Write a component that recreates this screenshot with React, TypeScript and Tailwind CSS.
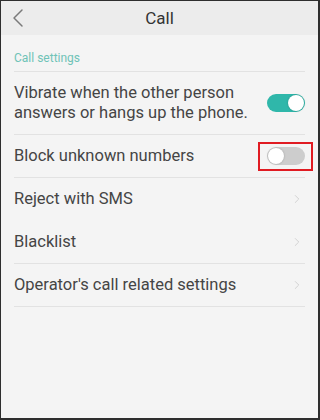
import { ChevronLeft, ChevronRight } from "lucide-react";

type Row = {
  label: string;
  kind: "on" | "off" | "link";
  tall?: boolean;
  boxed?: boolean;
  divider?: boolean;
};

const rows: Row[] = [
  { label: "Vibrate when the other person answers or hangs up the phone.", kind: "on", tall: true, divider: true },
  { label: "Block unknown numbers", kind: "off", boxed: true, divider: true },
  { label: "Reject with SMS", kind: "link", divider: false },
  { label: "Blacklist", kind: "link", divider: true },
  { label: "Operator's call related settings", kind: "link", divider: true },
];

function Toggle({ on }: { on: boolean }) {
  return (
    <div
      className={
        on
          ? "flex h-[18px] w-[38px] items-center justify-end rounded-full bg-[#2fb7aa] px-[1px]"
          : "flex h-[18px] w-[38px] items-center justify-start rounded-full bg-[#cdcdcd] px-[1px]"
      }
    >
      <div className="h-4 w-4 rounded-full bg-white shadow-[0_0_2px_rgba(0,0,0,0.25)]" />
    </div>
  );
}

export default function App() {
  return (
    <div
      className="flex h-[420px] w-[320px] flex-col overflow-hidden border-t border-l border-r-2 border-b-2 border-[#2e2e2e] bg-[#f4f4f4] text-[#454545]"
      style={{ fontFamily: "Roboto, 'Noto Sans', sans-serif" }}
    >
      <header className="relative flex h-[34px] shrink-0 items-center justify-center bg-[#ececec]">
        <ChevronLeft className="absolute left-[1px] top-[1px] h-[32px] w-[32px] text-[#7a7a7a]" strokeWidth={1.1} />
        <h1 className="text-[17px] leading-none text-[#333]">Call</h1>
      </header>

      <div className="px-[13px]">
        <div className="flex h-[37px] items-end border-b border-[#e2e2e2] pb-[7px]">
          <p className="text-[12px] leading-none text-[#6fc3b7]">Call settings</p>
        </div>

        {rows.map((row) => (
          <div
            key={row.label}
            className={
              (row.tall ? "h-[63px] " : "h-[43px] ") +
              "flex items-center justify-between " +
              (row.divider ? "border-b border-[#e2e2e2]" : "border-b border-transparent")
            }
          >
            <p className={row.tall ? "w-[242px] text-[16.5px] leading-[20px]" : "text-[16.5px] leading-[20px]"}>
              {row.label}
            </p>
            {row.kind === "link" ? (
              <ChevronRight className="mr-[1px] h-[14px] w-[14px] text-[#c8c8c8]" strokeWidth={1.3} />
            ) : row.boxed ? (
              <div className="-mr-[8px] flex h-[29px] w-[55px] items-center justify-center border-2 border-[#e01b22]">
                <Toggle on={false} />
              </div>
            ) : (
              <Toggle on={row.kind === "on"} />
            )}
          </div>
        ))}
      </div>
    </div>
  );
}
